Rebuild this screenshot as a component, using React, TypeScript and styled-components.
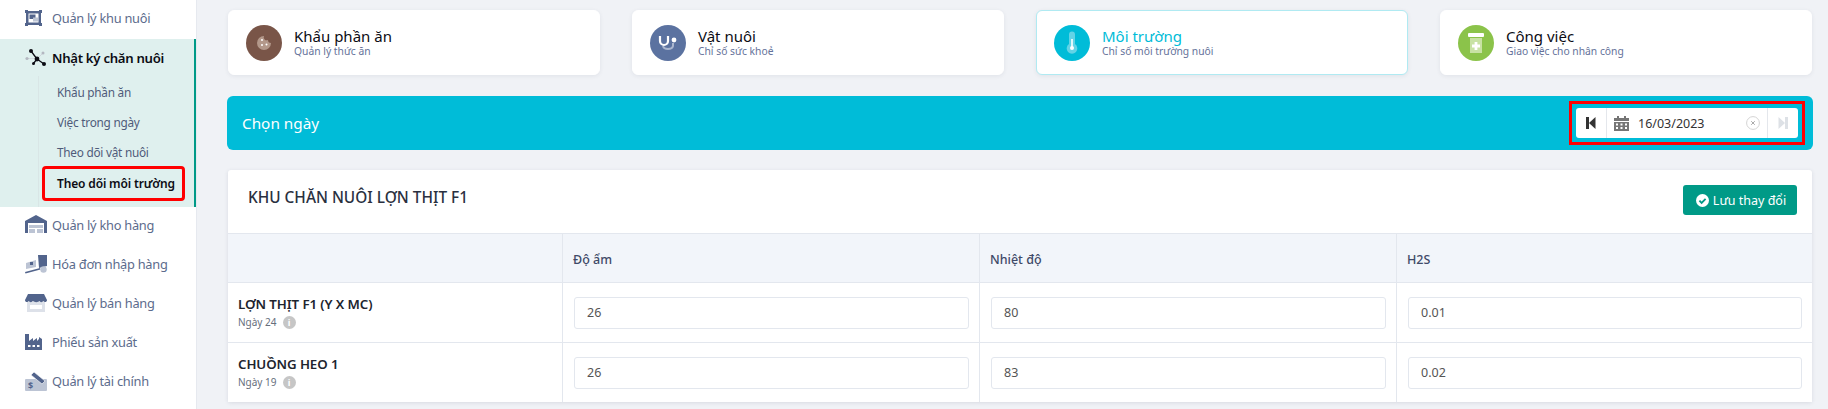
import React from 'react';
import styled, { createGlobalStyle } from 'styled-components';

const GlobalStyle = createGlobalStyle`
  html, body {
    margin: 0;
    padding: 0;
    height: 409px;
    overflow: hidden;
    background: #f0f2f6;
    font-family: 'Noto Sans', 'Open Sans', Arial, sans-serif;
  }
  * { box-sizing: border-box; }
`;

const Page = styled.div`
  display: flex;
  width: 1828px;
  height: 409px;
  overflow: hidden;
`;

const Sidebar = styled.aside`
  width: 197px;
  flex: none;
  background: #fff;
  border-right: 1px solid #e6e9ef;
`;

const MenuItem = styled.div`
  display: flex;
  align-items: center;
  height: 39px;
  padding: 0 0 3px 25px;
  gap: 5px;
  font-size: 12.8px;
  letter-spacing: -0.25px;
  color: #5c6b8c;
`;

const ActiveGroup = styled.div`
  background: #dff0ee;
  border-right: 2px solid #009a87;
  height: 168px;
`;

const ActiveHead = styled(MenuItem)`
  height: 37px;
  padding-bottom: 0;
  color: #0c0c14;
  font-size: 13.2px;
  font-weight: 600;
  letter-spacing: -0.3px;
`;

const SubMenu = styled.div`
  margin-left: 38px;
  border-left: 1px solid #d9e6e6;
  height: 131px;
  padding: 1px 0 0 18px;
`;

const SubItem = styled.div<{ $current?: boolean }>`
  height: 30px;
  display: flex;
  align-items: center;
  font-size: ${(p) => (p.$current ? '12px' : '11.8px')};
  letter-spacing: ${(p) => (p.$current ? '-0.15px' : '-0.25px')};
  color: ${(p) => (p.$current ? '#0c0c14' : '#4f5b7a')};
  font-weight: ${(p) => (p.$current ? 600 : 400)};
  ${(p) => p.$current && `
    height: 29px;
    width: 137px;
    margin: 2px 0 0 -12px;
    padding-left: 12px;
    outline: 3px solid #f00;
    border-radius: 1px;
    white-space: nowrap;
  `}
`;

const Main = styled.main`
  flex: 1;
  padding: 10px 16px 0 31px;
  min-width: 0;
`;

const CardRow = styled.div`
  display: grid;
  grid-template-columns: repeat(4, 372px);
  column-gap: 32px;
`;

const Card = styled.div<{ $active?: boolean }>`
  height: 65px;
  background: #fff;
  border-radius: 6px;
  border: 1px solid ${(p) => (p.$active ? '#b0eaf2' : '#fff')};
  box-shadow: 0 1px 4px rgba(40, 50, 80, 0.08);
  display: flex;
  align-items: center;
  padding-left: 17px;
  gap: 12px;
`;

const CardIcon = styled.div<{ $color: string }>`
  width: 36px;
  height: 36px;
  border-radius: 50%;
  background: ${(p) => p.$color};
  display: flex;
  align-items: center;
  justify-content: center;
  flex: none;
`;

const CardText = styled.div`
  display: flex;
  flex-direction: column;
`;

const CardTitle = styled.div<{ $active?: boolean }>`
  font-size: 15px;
  line-height: 17px;
  color: ${(p) => (p.$active ? '#00bcd8' : '#0c0c14')};
`;

const CardSub = styled.div`
  font-size: 10.3px;
  line-height: 13px;
  color: #65729a;
`;

const DateBar = styled.section`
  margin: 21px -1px 0;
  height: 54px;
  background: #00bcd8;
  border-radius: 6px;
  display: flex;
  align-items: center;
  justify-content: space-between;
  padding: 0 8px 0 15px;
  color: #fff;
  font-size: 15.3px;
`;

const DateFrame = styled.div`
  border: 3px solid #f00;
  padding: 4px;
`;

const DateBox = styled.div`
  width: 222px;
  height: 30px;
  background: #fff;
  border-radius: 3px;
  display: flex;
  align-items: center;
  color: #333;
  font-size: 12.5px;
`;

const DateStep = styled.div<{ $left?: boolean }>`
  width: 31px;
  height: 100%;
  flex: none;
  display: flex;
  align-items: center;
  justify-content: center;
  ${(p) => (p.$left ? 'border-right' : 'border-left')}: 1px solid #e4e7ec;
`;

const DateField = styled.div`
  flex: 1;
  display: flex;
  align-items: center;
  padding: 0 7px;
  gap: 9px;
`;

const DateValue = styled.span`
  flex: 1;
`;

const Panel = styled.section`
  margin-top: 20px;
  background: #fff;
  border-radius: 3px;
  box-shadow: 0 1px 4px rgba(40, 50, 80, 0.12);
`;

const PanelHead = styled.div`
  height: 63px;
  display: flex;
  align-items: center;
  justify-content: space-between;
  padding: 0 15px 3px 20px;
`;

const PanelTitle = styled.h2`
  margin: 0 0 5px;
  font-size: 15.4px;
  font-weight: 500;
  color: #2a3040;
`;

const SaveButton = styled.button`
  width: 114px;
  height: 30px;
  background: #009a87;
  border: 0;
  border-radius: 3px;
  color: #fff;
  font: inherit;
  font-size: 12.5px;
  display: flex;
  align-items: center;
  justify-content: center;
  gap: 4px;
  padding: 0 0 0 2px;
`;

const Row = styled.div<{ $head?: boolean }>`
  display: grid;
  grid-template-columns: 334px 417px 417px 416px;
  height: ${(p) => (p.$head ? '49px' : '60px')};
  background: ${(p) => (p.$head ? '#f2f5fa' : '#fff')};
  border-top: 1px solid #e3e7ee;
`;

const Cell = styled.div`
  display: flex;
  align-items: center;
  padding: 0 10px 0 11px;
  border-left: 1px solid #e3e7ee;
  &:first-child {
    border-left: 0;
    padding-left: 10px;
    flex-direction: column;
    align-items: flex-start;
    justify-content: center;
  }
`;

const HeadLabel = styled.span`
  font-size: 12.5px;
  color: #3f4a68;
  font-weight: 500;
  margin: 2px 0 0 -1px;
`;

const BarnName = styled.div`
  font-size: 13.3px;
  line-height: 17px;
  font-weight: 600;
  letter-spacing: -0.1px;
  color: #20242e;
`;

const BarnAge = styled.div`
  display: flex;
  align-items: center;
  gap: 6px;
  font-size: 10px;
  line-height: 14px;
  margin-top: 2px;
  color: #666e7c;
`;

const InfoDot = styled.span`
  width: 13px;
  height: 13px;
  border-radius: 50%;
  background: #c6c6c6;
  color: #fff;
  font-size: 9px;
  font-weight: 700;
  line-height: 13px;
  text-align: center;
`;

const NumberInput = styled.input`
  width: 100%;
  height: 32px;
  border: 1px solid #e3e7ee;
  border-radius: 3px;
  padding: 0 12px;
  font: inherit;
  font-size: 12.5px;
  color: #555;
  background: #fff;
`;

const Ico = ({ children }: { children: React.ReactNode }) => (
  <svg width="22" height="20" viewBox="0 0 22 20">
    {children}
  </svg>
);

const dark = '#52648c';
const soft = '#bcc4d4';

const icons = {
  area: (
    <Ico>
      <rect x="1" y="3" width="15" height="14" fill={dark} />
      <rect x="3.5" y="5.5" width="10" height="9" fill="#fff" />
      <rect x="4.5" y="6.5" width="6" height="4.5" fill={dark} />
      <rect x="8" y="9.5" width="5" height="4" fill={soft} />
      <rect x="0" y="2" width="3" height="3" fill={dark} />
      <rect x="14" y="2" width="3" height="3" fill={dark} />
      <rect x="0" y="15" width="3" height="3" fill={dark} />
      <rect x="14" y="15" width="3" height="3" fill={dark} />
    </Ico>
  ),
  log: (
    <Ico>
      <path d="M2 10.5H10M14 9L18 5" stroke="#cfd3da" strokeWidth="0.9" fill="none" />
      <circle cx="2" cy="10.5" r="1.6" fill="#b4b8c1" />
      <circle cx="18" cy="5" r="1.5" fill="#b4b8c1" />
      <path d="M6 3L12 11L8.5 15.5M12 11L19 16" stroke="#0c0c14" strokeWidth="1.3" fill="none" />
      <circle cx="6" cy="3" r="2" fill="#0c0c14" />
      <circle cx="12" cy="11" r="2.4" fill="#0c0c14" />
      <circle cx="8.5" cy="15.5" r="1.5" fill="#0c0c14" />
      <circle cx="19" cy="16" r="2" fill="#0c0c14" />
    </Ico>
  ),
  warehouse: (
    <Ico>
      <path d="M0 6L11 0L22 6V18H19V8H3V18H0Z" fill={dark} />
      <rect x="4" y="10" width="14" height="3" fill={soft} />
      <rect x="4" y="14" width="6" height="4" fill={soft} />
      <rect x="12" y="14" width="6" height="4" fill={soft} />
    </Ico>
  ),
  invoice: (
    <Ico>
      <path d="M1 9L11 6V13L1 15Z" fill={soft} />
      <path d="M13 1H22V12L14 14Z" fill={dark} />
      <path d="M0 18L15 14L15.5 15.5L0.5 19.5Z" fill={dark} />
      <circle cx="18.5" cy="15.5" r="3.2" fill={soft} />
      <rect x="5" y="8" width="3" height="3" fill={dark} />
    </Ico>
  ),
  shop: (
    <Ico>
      <rect x="2" y="9" width="18" height="10" fill={soft} opacity="0.5" />
      <rect x="5" y="12" width="12" height="4" fill="#fff" />
      <path d="M3 1H19L22 7C22 9.5 19 9.5 18.3 8C17.5 9.5 15 9.5 14.5 8C13.5 9.5 9 9.5 8 8C7 9.5 4.5 9.5 3.7 8C3 9.5 0 9.5 0 7Z" fill={dark} />
    </Ico>
  ),
  factory: (
    <Ico>
      <path d="M0 2H4V9L8 6V9L12 6V9L14 7V5L17 7V18H0Z" fill={dark} />
      <rect x="3" y="13" width="2.5" height="2" fill="#fff" />
      <rect x="7.5" y="13" width="2.5" height="2" fill="#fff" />
      <rect x="12" y="13" width="2.5" height="2" fill="#fff" />
    </Ico>
  ),
  finance: (
    <Ico>
      <rect x="0" y="8" width="22" height="12" rx="1" fill={soft} />
      <path d="M9 1L20 10L17 13L6 4Z" fill={dark} stroke="#fff" strokeWidth="0.6" />
      <text x="3" y="18" fontSize="9" fontWeight="700" fill={dark}>$</text>
    </Ico>
  ),
};

const FeedIcon = () => (
  <svg width="20" height="20" viewBox="0 0 20 20">
    <path d="M10 3a7 7 0 1 0 7 7 3 3 0 0 1-3-3 3 3 0 0 1-4-4z" fill="#b3988a" />
    <circle cx="8" cy="7" r="1" fill="#fff" />
    <circle cx="8" cy="12" r="1" fill="#fff" />
    <circle cx="12.5" cy="11.5" r="1" fill="#fff" />
  </svg>
);

const StethIcon = () => (
  <svg width="24" height="24" viewBox="0 0 24 24" fill="none">
    <path d="M7 15c1 4 9 4 10 0v-3" stroke="#aab6cf" strokeWidth="2" />
    <path d="M4 5v5a4 4 0 0 0 8 0V5" stroke="#fff" strokeWidth="2.2" />
    <circle cx="18" cy="9" r="2.4" fill="#fff" />
  </svg>
);

const ThermoIcon = () => (
  <svg width="20" height="24" viewBox="0 0 20 24">
    <path d="M7 3.5a3 3 0 0 1 6 0v9.5a5.3 5.3 0 1 1-6 0z" fill="#62d3e6" />
    <rect x="9.2" y="8" width="1.6" height="8" fill="#fff" />
    <circle cx="10" cy="17" r="2" fill="#fff" />
  </svg>
);

const JarIcon = () => (
  <svg width="20" height="24" viewBox="0 0 20 24">
    <rect x="2" y="2" width="16" height="4" rx="1" fill="#fff" />
    <rect x="4" y="7" width="12" height="15" fill="#c8e2a4" />
    <path d="M8.6 11h2.8v2.6H14v2.8h-2.6V19H8.6v-2.6H6v-2.8h2.6z" fill="#fff" />
  </svg>
);

const StepIcon = ({ flip, color }: { flip?: boolean; color: string }) => (
  <svg width="10" height="12" viewBox="0 0 10 12" style={flip ? { transform: 'scaleX(-1)' } : undefined}>
    <rect x="0" y="0" width="3" height="12" fill={color} />
    <path d="M3 6L9.5 0V12Z" fill={color} />
  </svg>
);

const CalendarIcon = () => (
  <svg width="15" height="15" viewBox="0 0 15 15" fill="#757575">
    <rect x="3" y="0" width="2" height="3" />
    <rect x="10" y="0" width="2" height="3" />
    <path d="M0 2h15v3H0zM0 6h15v9H0z" />
    <path d="M2 7.5h2v2H2zM6.5 7.5h2v2h-2zM11 7.5h2v2h-2zM2 11h2v2H2zM6.5 11h2v2h-2zM11 11h2v2h-2z" fill="#fff" />
  </svg>
);

const ClearIcon = () => (
  <svg width="14" height="14" viewBox="0 0 14 14" fill="none" stroke="#d4d4d4">
    <circle cx="7" cy="7" r="6.4" />
    <path d="M5.2 5.2l3.6 3.6M8.8 5.2l-3.6 3.6" stroke="#aaa" />
  </svg>
);

const CheckIcon = () => (
  <svg width="13" height="13" viewBox="0 0 13 13">
    <circle cx="6.5" cy="6.5" r="6.5" fill="#fff" />
    <path d="M3.4 6.7l2.2 2.2 4-4" stroke="#009a87" strokeWidth="1.8" fill="none" />
  </svg>
);

const cards = [
  { title: 'Khẩu phần ăn', sub: 'Quản lý thức ăn', color: '#795548', icon: <FeedIcon /> },
  { title: 'Vật nuôi', sub: 'Chỉ số sức khoẻ', color: '#5b72a0', icon: <StethIcon /> },
  { title: 'Môi trường', sub: 'Chỉ số môi trường nuôi', color: '#00bcd8', icon: <ThermoIcon />, active: true },
  { title: 'Công việc', sub: 'Giao việc cho nhân công', color: '#8bc34a', icon: <JarIcon /> },
];

const barns = [
  { name: 'LỢN THỊT F1 (Y X MC)', age: 'Ngày 24', values: ['26', '80', '0.01'] },
  { name: 'CHUỒNG HEO 1', age: 'Ngày 19', values: ['26', '83', '0.02'] },
];

export default function App() {
  return (
    <Page>
      <GlobalStyle />
      <Sidebar>
        <MenuItem>{icons.area}Quản lý khu nuôi</MenuItem>
        <ActiveGroup>
          <ActiveHead>{icons.log}Nhật ký chăn nuôi</ActiveHead>
          <SubMenu>
            <SubItem>Khẩu phần ăn</SubItem>
            <SubItem>Việc trong ngày</SubItem>
            <SubItem>Theo dõi vật nuôi</SubItem>
            <SubItem $current>Theo dõi môi trường</SubItem>
          </SubMenu>
        </ActiveGroup>
        <MenuItem>{icons.warehouse}Quản lý kho hàng</MenuItem>
        <MenuItem>{icons.invoice}Hóa đơn nhập hàng</MenuItem>
        <MenuItem>{icons.shop}Quản lý bán hàng</MenuItem>
        <MenuItem>{icons.factory}Phiếu sản xuất</MenuItem>
        <MenuItem>{icons.finance}Quản lý tài chính</MenuItem>
      </Sidebar>

      <Main>
        <CardRow>
          {cards.map((card) => (
            <Card key={card.title} $active={card.active}>
              <CardIcon $color={card.color}>{card.icon}</CardIcon>
              <CardText>
                <CardTitle $active={card.active}>{card.title}</CardTitle>
                <CardSub>{card.sub}</CardSub>
              </CardText>
            </Card>
          ))}
        </CardRow>

        <DateBar>
          Chọn ngày
          <DateFrame>
            <DateBox>
              <DateStep $left>
                <StepIcon color="#333" />
              </DateStep>
              <DateField>
                <CalendarIcon />
                <DateValue>16/03/2023</DateValue>
                <ClearIcon />
              </DateField>
              <DateStep>
                <StepIcon flip color="#dde1e6" />
              </DateStep>
            </DateBox>
          </DateFrame>
        </DateBar>

        <Panel>
          <PanelHead>
            <PanelTitle>KHU CHĂN NUÔI LỢN THỊT F1</PanelTitle>
            <SaveButton>
              <CheckIcon />
              Lưu thay đổi
            </SaveButton>
          </PanelHead>
          <Row $head>
            <Cell />
            <Cell><HeadLabel>Độ ẩm</HeadLabel></Cell>
            <Cell><HeadLabel>Nhiệt độ</HeadLabel></Cell>
            <Cell><HeadLabel>H2S</HeadLabel></Cell>
          </Row>
          {barns.map((barn) => (
            <Row key={barn.name}>
              <Cell>
                <BarnName>{barn.name}</BarnName>
                <BarnAge>
                  {barn.age}
                  <InfoDot>i</InfoDot>
                </BarnAge>
              </Cell>
              {barn.values.map((value, i) => (
                <Cell key={i}>
                  <NumberInput defaultValue={value} />
                </Cell>
              ))}
            </Row>
          ))}
        </Panel>
      </Main>
    </Page>
  );
}
